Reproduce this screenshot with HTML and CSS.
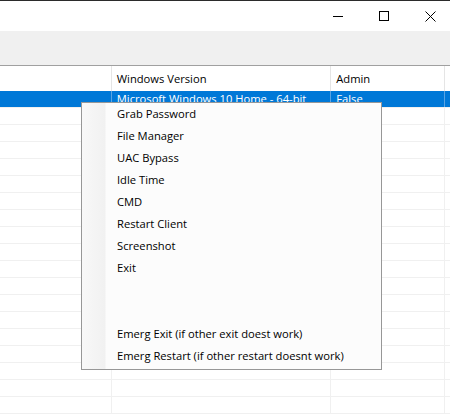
FILE: index.html
```html
<!DOCTYPE html>
<html>
<head>
<meta charset="utf-8">
<link rel="stylesheet" href="styles.css">
</head>
<body>
<div class="window">
  <div class="titlebar">
    <div class="caption-btn">
      <svg width="10" height="10" viewBox="0 0 10 10"><path d="M0 5.5H10" stroke="#000" stroke-width="1"/></svg>
    </div>
    <div class="caption-btn">
      <svg width="10" height="10" viewBox="0 0 10 10"><rect x="0.5" y="0.5" width="9" height="9" fill="none" stroke="#000" stroke-width="1"/></svg>
    </div>
    <div class="caption-btn close">
      <svg width="11" height="11" viewBox="0 0 11 11"><path d="M0.5 0.5L10.5 10.5M10.5 0.5L0.5 10.5" stroke="#000" stroke-width="1"/></svg>
    </div>
  </div>
  <div class="toolbar"></div>
  <div class="grid">
    <div class="row header">
      <div class="cell c1"></div>
      <div class="cell c2">Windows Version</div>
      <div class="cell c3">Admin</div>
      <div class="cell c4"></div>
    </div>
    <div class="row selected">
      <div class="cell c1"></div>
      <div class="cell c2">Microsoft Windows 10 Home - 64-bit</div>
      <div class="cell c3">False</div>
      <div class="cell c4"></div>
    </div>
    <div class="row"><div class="cell c1"></div><div class="cell c2"></div><div class="cell c3"></div><div class="cell c4"></div></div>
    <div class="row"><div class="cell c1"></div><div class="cell c2"></div><div class="cell c3"></div><div class="cell c4"></div></div>
    <div class="row"><div class="cell c1"></div><div class="cell c2"></div><div class="cell c3"></div><div class="cell c4"></div></div>
    <div class="row"><div class="cell c1"></div><div class="cell c2"></div><div class="cell c3"></div><div class="cell c4"></div></div>
    <div class="row"><div class="cell c1"></div><div class="cell c2"></div><div class="cell c3"></div><div class="cell c4"></div></div>
    <div class="row"><div class="cell c1"></div><div class="cell c2"></div><div class="cell c3"></div><div class="cell c4"></div></div>
    <div class="row"><div class="cell c1"></div><div class="cell c2"></div><div class="cell c3"></div><div class="cell c4"></div></div>
    <div class="row"><div class="cell c1"></div><div class="cell c2"></div><div class="cell c3"></div><div class="cell c4"></div></div>
    <div class="row"><div class="cell c1"></div><div class="cell c2"></div><div class="cell c3"></div><div class="cell c4"></div></div>
    <div class="row"><div class="cell c1"></div><div class="cell c2"></div><div class="cell c3"></div><div class="cell c4"></div></div>
    <div class="row"><div class="cell c1"></div><div class="cell c2"></div><div class="cell c3"></div><div class="cell c4"></div></div>
    <div class="row"><div class="cell c1"></div><div class="cell c2"></div><div class="cell c3"></div><div class="cell c4"></div></div>
    <div class="row"><div class="cell c1"></div><div class="cell c2"></div><div class="cell c3"></div><div class="cell c4"></div></div>
    <div class="row"><div class="cell c1"></div><div class="cell c2"></div><div class="cell c3"></div><div class="cell c4"></div></div>
    <div class="row"><div class="cell c1"></div><div class="cell c2"></div><div class="cell c3"></div><div class="cell c4"></div></div>
    <div class="row"><div class="cell c1"></div><div class="cell c2"></div><div class="cell c3"></div><div class="cell c4"></div></div>
    <div class="row"><div class="cell c1"></div><div class="cell c2"></div><div class="cell c3"></div><div class="cell c4"></div></div>
    <div class="row"><div class="cell c1"></div><div class="cell c2"></div><div class="cell c3"></div><div class="cell c4"></div></div>
  </div>
  <div class="context-menu">
    <div class="item">Grab Password</div>
    <div class="item">File Manager</div>
    <div class="item">UAC Bypass</div>
    <div class="item">Idle Time</div>
    <div class="item">CMD</div>
    <div class="item">Restart Client</div>
    <div class="item">Screenshot</div>
    <div class="item">Exit</div>
    <div class="item"></div>
    <div class="item"></div>
    <div class="item">Emerg Exit (if other exit doest work)</div>
    <div class="item">Emerg Restart (if other restart doesnt work)</div>
  </div>
</div>
</body>
</html>
```
FILE: styles.css
```css
html, body {
  margin: 0;
  padding: 0;
  background: #fff;
  overflow: hidden;
}
body {
  font-family: "Open Sans", "Noto Sans", "Liberation Sans", sans-serif;
  font-size: 11.2px;
  color: #000;
}
.window {
  position: relative;
  width: 450px;
  height: 417px;
  overflow: hidden;
  background: #fff;
}
.titlebar {
  height: 30px;
  border-top: 1px solid #2b2b2b;
  background: #fff;
  display: flex;
  justify-content: flex-end;
  margin-right: -3px;
}
.caption-btn {
  width: 46px;
  display: flex;
  align-items: center;
  justify-content: center;
}
.caption-btn svg {
  display: block;
}
.toolbar {
  height: 34px;
  background: #f0f0f0;
  border-bottom: 1px solid #a0a0a0;
}
.grid {
  display: flex;
  flex-direction: column;
}
.row {
  display: flex;
  height: 16px;
  border-bottom: 1px solid #f0f0f0;
}
.row.header {
  height: 25px;
  border-bottom: none;
}
.cell {
  box-sizing: border-box;
  border-right: 1px solid #f0f0f0;
  padding-left: 5px;
  white-space: nowrap;
  overflow: hidden;
  line-height: 16px;
}
.header .cell {
  line-height: 25px;
  border-right-color: #e5e5e5;
}
.c1 { width: 112px; }
.c2 { width: 220px; }
.c3 { width: 114px; }
.c4 { flex: 1; border-right: none; }
.row.selected {
  background: #0078d7;
  color: #fff;
  border-bottom-color: #f0f0f0;
}
.row.selected .cell {
  border-right-color: #5aa4e3;
}
.context-menu {
  position: absolute;
  left: 81px;
  top: 102px;
  width: 299px;
  padding: 0 0 2px 0;
  border: 1px solid #979797;
  background: linear-gradient(to right, #f8f8f8 0px, #f1f1f1 23px, #fcfcfc 24px);
}
.item {
  height: 22px;
  line-height: 22px;
  padding-left: 35px;
  white-space: nowrap;
}
```
